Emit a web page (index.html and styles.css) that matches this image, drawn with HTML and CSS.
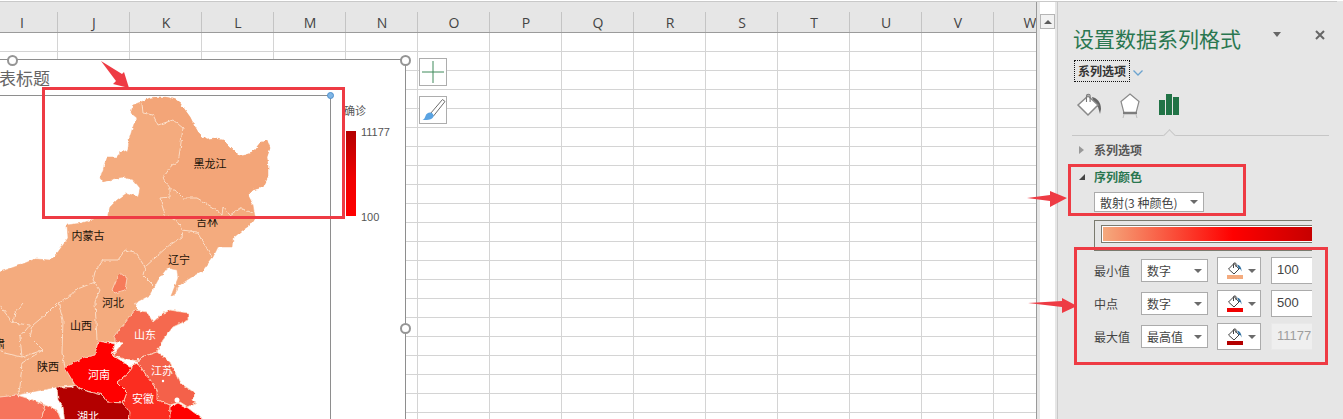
FILE: index.html
```html
<!DOCTYPE html>
<html lang="zh-CN">
<head>
<meta charset="utf-8">
<title>设置数据系列格式</title>
<link rel="stylesheet" href="styles.css">
</head>
<body>
<svg class="defs" width="0" height="0">
  <filter id="rough" x="-5%" y="-5%" width="110%" height="110%" color-interpolation-filters="sRGB">
    <feTurbulence type="fractalNoise" baseFrequency="0.22" numOctaves="2" seed="4"/>
    <feDisplacementMap in="SourceGraphic" scale="3.500" xChannelSelector="R" yChannelSelector="G"/>
  </filter>
  <symbol id="bucket" viewBox="0 0 16 13">
    <path d="M1.500 7 7 1.500 12 7 7 12Z" fill="#fff" stroke="#444" stroke-width="1"/>
    <path d="M6.500 6V2.200a1.300 1.300 0 0 1 2.600 0V5" fill="none" stroke="#444" stroke-width="1"/>
    <path d="M10 2.500c3 .6 4.500 3 4.600 7l-1.300-2.400L12 7Z" fill="#2f6f9f"/>
  </symbol>
</svg>
<main class="app">
  <section class="sheet">
    <header class="col-heads">
      <div class="col first">I</div><div class="col">J</div><div class="col">K</div><div class="col">L</div><div class="col">M</div><div class="col">N</div><div class="col">O</div><div class="col">P</div><div class="col">Q</div><div class="col">R</div><div class="col">S</div><div class="col">T</div><div class="col">U</div><div class="col">V</div><div class="col">W</div>
    </header>
    <div class="cells"></div>

    <div class="chart">
      <div class="chart-title">图表标题</div>
      <svg class="map" width="450" height="380" viewBox="-19 60 450 380">
        <g class="rough">
        <path class="land" d="M-20 280 0 272 20 265 35 259 50 260 58 252 68 238 67 225 82 223 95 219 107 218 110 207 117 200 127 193 138 197 140 188 133 180 123 177 113 179 103 182 100 178 103 170 105 163 107 157 117 157 120 153 128 150 129 140 132 130 134 124 137 118 131 113 133 105 138 103 143 101 150 98 157 97 164 97 170 98 176 100 180 103 185 110 190 117 194 125 198 132 203 137 207 140 215 139 223 140 228 145 233 150 240 156 246 155 252 153 256 148 260 143 267 140 270 148 267 157 268 167 268 177 263 187 253 190 248 195 253 205 255 217 250 225 243 230 233 238 232 247 218 247 213 257 203 270 187 280 177 287 175 295 171 296 178 278 177 270 167 268 158 280 150 295 135 303 138 310 135 310 125 323 115 335 115 342 98 341 95 355 82 358 65 368 75 385 57 387 17 395 0 397-20 400Z"/>
        <path class="orange-2" d="M143 101 150 98 157 97 164 97 170 98 176 100 180 103 185 110 190 117 194 125 198 132 203 137 207 140 215 139 223 140 228 145 233 150 240 156 246 155 252 153 256 148 260 143 267 140 270 148 267 157 268 167 268 177 263 187 253 190 248 195 253 205 253 213 240 208 230 215 223 207 222 215 212 207 197 198 183 198 177 192 170 188 163 178 172 165 178 162 180 150 183 128 173 120 158 125 153 115 143 113 142 104Z"/>
        <g class="borders">
          <path d="M142 104 143 113 153 115 158 125 173 120 183 128 180 150 178 162 172 165 163 178 170 188 170 197 160 198 162 205 165 215 177 221 182 230 197 232 212 257"/>
          <path d="M170 188 177 192 183 198 197 198 212 207 222 215 223 207 230 215 240 208 253 213"/>
          <path d="M183 232 182 237 167 247 155 258 145 267 143 275 153 285"/>
          <path d="M145 267 135 252 125 250 118 260 103 260 95 272 93 280 100 290 95 302 97 340"/>
          <path d="M95 282 75 290 68 298 58 302 63 320 62 353 65 367"/>
          <path d="M58 302 45 315 33 325 30 337 43 350 22 363 20 387 17 395"/>
          <path d="M23 303 15 313 13 323 30 325 20 337 22 357 43 350"/>
          <path d="M0 306 13 323M0 352 22 357"/>
        </g>
        <path class="beijing" d="M120 273 127 278 125 290 115 293 112 290 117 278Z"/>
        <path class="shandong" d="M135 310 147 312 153 322 163 313 170 310 188 313 188 320 173 327 163 340 157 352 142 357 138 362 127 360 112 355 123 343 115 342 115 335 125 323Z"/>
        <path class="jiangsu" d="M142 357 157 352 170 362 180 383 195 393 192 400 197 403 188 407 180 402 170 405 157 400 157 390 148 378 138 363Z"/>
        <path class="anhui" d="M132 365 138 363 148 378 157 390 157 400 170 405 170 425 133 425 123 403 127 392 117 382 128 373 132 368Z"/>
        <path class="henan" d="M98 341 115 344 112 355 125 363 132 368 128 373 117 382 127 392 123 403 107 402 102 395 83 390 75 385 65 368 82 358 95 355Z"/>
        <path class="zhejiang" d="M170 407 178 403 188 408 200 417 203 425 170 425Z"/>
        <path class="hubei" d="M57 387 72 387 75 385 83 390 102 395 107 402 123 403 130 413 128 425 65 425 63 407 58 400Z"/>
        <path class="sichuan" d="M-20 400 0 397 17 395 33 400 45 405 40 425-20 425Z"/>
        <path class="chongqing" d="M45 405 57 410 63 425 40 425Z"/>
        </g>
        <circle class="sea" cx="177" cy="400" r="2.500"/>
        <circle class="sea" cx="163" cy="381" r="1.200"/>
        <circle class="sea" cx="138" cy="359" r="1"/>
        <g class="labels">
          <text x="210" y="168">黑龙江</text>
          <text x="88" y="240">内蒙古</text>
          <text x="207" y="226">吉林</text>
          <text x="179" y="264">辽宁</text>
          <text x="113" y="307">河北</text>
          <text x="81" y="330">山西</text>
          <text x="48" y="371">陕西</text>
          <text x="-6" y="348">甘肃</text>
          <text class="light" x="145" y="339">山东</text>
          <text class="light" x="99" y="379">河南</text>
          <text class="light" x="162" y="375">江苏</text>
          <text class="light" x="143" y="403">安徽</text>
          <text class="light" x="88" y="421">湖北</text>
        </g>
      </svg>
      <div class="plot"><i class="plot-handle"></i></div>
      <div class="legend-title">确诊</div>
      <div class="legend-bar"></div>
      <div class="legend-max">11177</div>
      <div class="legend-min">100</div>
      <i class="handle h-top"></i>
      <i class="handle h-corner"></i>
      <i class="handle h-mid"></i>
    </div>

    <button class="chart-btn btn-plus" aria-label="图表元素">
      <svg width="26" height="26" viewBox="0 0 26 26"><path class="plus-stroke" d="M13 2v22M2 13h22"/></svg>
    </button>
    <button class="chart-btn btn-brush" aria-label="图表样式">
      <svg width="26" height="26" viewBox="0 0 26 26">
        <path class="brush-handle" d="M10.500 16.500 22.500 2.500 25 4.500 13.500 19Z"/>
        <path class="brush-tip" d="M10 15.500c2 0 3.500 1.500 3.500 3.500-.5 3-4 4.500-11 4 2-1 2.500-2.500 3-4 .6-2 2.500-3.500 4.500-3.500Z"/>
      </svg>
    </button>
  </section>

  <div class="scrollbar"><div class="scroll-up"><i></i></div></div>

  <aside class="panel">
    <div class="panel-head">
      <h1 class="panel-title">设置数据系列格式</h1>
      <i class="panel-caret"></i>
      <svg class="panel-close" width="10" height="10" viewBox="0 0 10 10"><path d="M1 1 9 9M9 1 1 9"/></svg>
    </div>
    <div class="tab-row">
      <span class="tab">系列选项</span>
      <svg class="chev" width="10" height="6" viewBox="0 0 10 6"><path d="M.5.500 5 5 9.500.500"/></svg>
    </div>
    <div class="icon-row">
      <svg width="27" height="25" viewBox="0 0 27 25">
        <path d="M16 5c5 1 9 5 9 12l-1 5-2-7-4-3Z" fill="#666"/>
        <path d="M2 13 12 4 22 13 12 23Z" fill="#fff" stroke="#8a8a8a" stroke-width="1.500"/>
        <path d="M10.500 10V4a1.800 1.800 0 0 1 3.600 0v6" fill="none" stroke="#777" stroke-width="1.100"/>
      </svg>
      <svg class="pent" width="22" height="26" viewBox="0 0 22 26">
        <path d="M11 2 20 9.500 17 21H5L2 9.500Z" fill="#fff" stroke="#8a8a8a" stroke-width="1.200"/>
        <path d="M4 21h14" stroke="#7d7d7d" stroke-width="2.500"/>
        <path d="M5 22.500 4 26M17 22.500 18 26" stroke="#bbb" stroke-width="1"/>
      </svg>
      <div class="bars"><i class="b1"></i><i class="b2"></i><i class="b3"></i></div>
    </div>
    <div class="divider"><i class="notch"></i></div>
    <div class="sec-head"><i class="tri-open"></i><span>系列选项</span></div>
    <div class="sec-head active"><i class="tri-filled"></i><span>序列颜色</span></div>
    <div class="pad">
      <div class="select scatter"><span>散射(3 种颜色)</span><i class="caret"></i></div>
    </div>
    <div class="clip">
      <div class="gradient-box"><div class="gradient"></div></div>
      <div class="grid-rows">
        <span class="r-label">最小值</span>
        <div class="select"><span>数字</span><i class="caret"></i></div>
        <div class="color-btn"><div class="swatch"><svg width="16" height="13"><use href="#bucket"/></svg><i class="bar c-min"></i></div><i class="caret"></i></div>
        <div class="num">100</div>
        <span class="r-label">中点</span>
        <div class="select"><span>数字</span><i class="caret"></i></div>
        <div class="color-btn"><div class="swatch"><svg width="16" height="13"><use href="#bucket"/></svg><i class="bar c-mid"></i></div><i class="caret"></i></div>
        <div class="num">500</div>
        <span class="r-label">最大值</span>
        <div class="select"><span>最高值</span><i class="caret"></i></div>
        <div class="color-btn"><div class="swatch"><svg width="16" height="13"><use href="#bucket"/></svg><i class="bar c-max"></i></div><i class="caret"></i></div>
        <div class="num off">11177</div>
      </div>
    </div>
  </aside>

  <div class="note note-a"></div>
  <div class="note note-b"></div>
  <div class="note note-c"></div>
  <svg class="arrows" width="1343" height="419" viewBox="0 0 1343 419">
    <path d="M101 61 122 74 124 72 129 88 113 84 116 81Z"/>
    <path d="M1027 198 1050 195 1050 191 1067 198 1050 207 1050 201Z"/>
    <path d="M1028 303 1062 301 1062 298 1077 306 1062 313 1062 307Z"/>
  </svg>
</main>
</body>
</html>
```
FILE: styles.css
```css
* { box-sizing: border-box; }
html, body { margin: 0; padding: 0; }
body {
  width: 1343px;
  height: 419px;
  overflow: hidden;
  background: #e6e6e6;
  font-family: "Noto Sans CJK SC", "Noto Sans", sans-serif;
  color: #444;
}
.defs { position: absolute; }
.app { position: relative; display: flex; width: 1343px; height: 419px; overflow: hidden; border-top: 1px solid #fff; }
.app::before { content: ""; position: absolute; left: 0; top: 0; width: 1337px; height: 1px; background: #c9c9c9; z-index: 3; }

/* sheet */
.sheet { position: relative; flex: 0 0 1037px; height: 418px; overflow: hidden; display: flex; flex-direction: column; background: #fff; border-right: 1px solid #9a9a9a; }
.col-heads { flex: 0 0 30px; display: flex; margin-left: -14px; background: #e6e6e6; border-bottom: 1px solid #9b9b9b; }
.col { flex: 0 0 72px; padding-top: 12px; text-align: center; position: relative; font: 14px/19px "Open Sans", "Liberation Sans", sans-serif; color: #444; }
.col::after { content: ""; position: absolute; right: 0; top: 11px; bottom: 0; width: 1px; background: #c4c4c4; }
.cells {
  flex: 1;
  background-color: #fff;
  background-image:
    linear-gradient(to right, #d4d4d4 1px, transparent 1px),
    linear-gradient(to bottom, #d4d4d4 1px, transparent 1px);
  background-size: 72px 19px;
  background-position: 57px 18px;
}

/* chart */
.chart { position: absolute; left: -20px; top: 58px; width: 426px; height: 420px; background: #fff; border: 1px solid #8e8e8e; }
.map { position: absolute; left: 0; top: 0; }
.rough { filter: url(#rough); }
.land { fill: #f4ab7e; stroke: #f4ab7e; stroke-width: .5; }
.orange-2 { fill: #f3a578; }
.borders path { fill: none; stroke: #fbdcc5; stroke-width: 1; }
.beijing { fill: #f67b5a; stroke: #fbdcc5; stroke-width: .8; }
.shandong { fill: #f5694f; stroke: #fbdcc5; stroke-width: .8; }
.jiangsu { fill: #f4614a; stroke: #fbdcc5; stroke-width: .8; }
.anhui { fill: #fb2d20; stroke: #fbdcc5; stroke-width: .8; }
.henan { fill: #ff0000; stroke: #fbdcc5; stroke-width: .8; }
.zhejiang { fill: #ff0000; stroke: #fbdcc5; stroke-width: .8; }
.hubei { fill: #b30000; stroke: #fbdcc5; stroke-width: .8; }
.sichuan { fill: #f6745c; stroke: #fbdcc5; stroke-width: .8; }
.chongqing { fill: #f5614a; stroke: #fbdcc5; stroke-width: .8; }
.sea { fill: #fff; }
.labels text { font-size: 11px; fill: #1a1208; text-anchor: middle; }
.labels text.light { fill: #fff; }
.chart-title { position: absolute; left: 1px; top: 6px; font-size: 17px; line-height: 24px; color: #666; white-space: nowrap; }
.plot { position: absolute; left: 0; top: 35px; width: 350px; height: 400px; border: 1px solid #8e8e8e; border-left: 0; border-bottom: 0; }
.plot-handle { position: absolute; right: -4px; top: -4px; width: 7px; height: 7px; border-radius: 50%; background: #7fb6e6; border: 1px solid #4f8fcb; }
.legend-title { position: absolute; left: 363px; top: 42px; width: 22px; overflow: hidden; font-size: 11px; line-height: 16px; color: #555; white-space: nowrap; }
.legend-bar { position: absolute; left: 365px; top: 71px; width: 10px; height: 85px; background: linear-gradient(to bottom, #b30000, #f00000 55%, #ff0000); }
.legend-max { position: absolute; left: 380px; top: 65px; font: 11px/14px "Liberation Sans", sans-serif; color: #555; }
.legend-min { position: absolute; left: 380px; top: 150px; font: 11px/14px "Liberation Sans", sans-serif; color: #555; }
.handle { position: absolute; width: 11px; height: 11px; border-radius: 50%; background: #fff; border: 2px solid #959595; }
.h-top { left: 26px; top: -5px; }
.h-corner { right: -6px; top: -5px; }
.h-mid { right: -6px; top: 263px; }

.chart-btn { position: absolute; left: 419px; width: 28px; height: 28px; padding: 0; background: #fff; border: 1px solid #adadad; display: block; }
.chart-btn svg { display: block; }
.btn-plus { top: 57px; }
.btn-brush { top: 95px; }
.plus-stroke { fill: none; stroke: #3f8a5a; stroke-width: 1; }
.brush-handle { fill: #fff; stroke: #6d6d6d; stroke-width: 1; }
.brush-tip { fill: #5aa3e2; }

/* scrollbar */
.scrollbar { flex: 0 0 18px; padding: 13px 0 0 3px; background: linear-gradient(to right, #e6e6e6 3px, #fff 3px, #fff 18px); }
.scroll-up { width: 15px; height: 15px; display: flex; align-items: center; justify-content: center; background: #f2f2f2; border: 1px solid #b5b5b5; }
.scroll-up i { width: 0; height: 0; border: 4px solid transparent; border-top: 0; border-bottom: 4px solid #5c5c5c; }

/* panel */
.panel { flex: 1; min-width: 0; height: 418px; margin-left: 2px; padding-left: 15px; border-left: 1px solid #c9c9c9; color: #444; }
.panel-head { display: flex; align-items: center; height: 30px; margin-top: 22px; position: relative; }
.panel-title { margin: 0; font-size: 21px; line-height: 30px; font-weight: 400; color: #2a7750; white-space: nowrap; }
.panel-caret { margin-left: 32px; margin-top: -7px; width: 0; height: 0; border: 4.500px solid transparent; border-bottom: 0; border-top: 5px solid #666; }
.panel-close { margin-left: 34px; margin-top: -7px; }
.panel-close path { fill: none; stroke: #666; stroke-width: 2; }
.tab-row { display: flex; align-items: center; margin-top: 7px; height: 22px; padding-left: 1px; }
.tab { height: 22px; padding: 0 3px; border: 1px dotted #111; font-size: 12px; line-height: 20px; font-weight: 700; color: #333; }
.chev { margin-left: 3px; margin-top: 3px; }
.chev path { fill: none; stroke: #6ba3cf; stroke-width: 1.300; }
.icon-row { display: flex; align-items: flex-start; margin-top: 10px; height: 26px; padding-left: 3px; }
.pent { margin-left: 16px; }
.bars { display: flex; align-items: flex-end; gap: 1px; margin-left: 18px; height: 23px; }
.bars i { display: block; width: 6px; background: #217346; }
.b1 { height: 15px; }
.b2 { height: 21px; }
.b3 { height: 18px; }
.divider { position: relative; margin-top: 17px; width: 257px; height: 1px; background: #c6c6c6; margin-left: -1px; }
.notch { position: absolute; left: 93px; top: -4px; width: 9px; height: 9px; background: #e6e6e6; border-left: 1px solid #c6c6c6; border-top: 1px solid #c6c6c6; transform: rotate(45deg); }
.sec-head { display: flex; align-items: center; height: 18px; margin-top: 5px; padding-left: 6px; font-size: 12px; font-weight: 700; color: #555; }
.sec-head.active { margin-top: 9px; color: #2a7750; }
.sec-head span { margin-left: 8px; line-height: 18px; }
.tri-open { width: 0; height: 0; border: 4px solid transparent; border-left: 5px solid #999; border-right: 0; margin-right: 2px; }
.tri-filled { width: 0; height: 0; border-top: 6px solid transparent; border-right: 6px solid #444; margin-right: 1px; }
.pad { padding-left: 21px; margin-top: 6px; }
.select { display: flex; align-items: center; justify-content: space-between; height: 23px; padding: 0 5px; background: #fff; border: 1px solid #ababab; font-size: 12px; color: #444; white-space: nowrap; }
.scatter { width: 110px; height: 20px; }
.caret { flex: none; width: 0; height: 0; border: 4px solid transparent; border-bottom: 0; border-top: 4px solid #6b6b6b; }
.clip { width: 239px; overflow: hidden; }
.gradient-box { margin: 8px 0 0 21px; height: 31px; width: 240px; padding: 4px 0 0 6px; border: 1px solid #7a7a6e; border-right: 0; }
.gradient { width: 240px; height: 18px; border: 1px solid #7a7a6e; outline: 1px solid #fff; outline-offset: -2px; background: linear-gradient(to right, #f4ab7e 0, #ff0000 55%, #b30000 100%); }
.grid-rows { display: grid; grid-template-columns: 47px 76px 54px 60px; column-gap: 0; row-gap: 6px; align-items: center; margin: 6px 0 0 21px; width: 250px; }
.grid-rows .select { width: 67px; }
.r-label { font-size: 12px; line-height: 27px; color: #444; }
.color-btn { display: flex; align-items: center; justify-content: space-between; width: 44px; height: 27px; padding: 0 4px 0 8px; background: #fff; border: 1px solid #ababab; }
.swatch { display: flex; flex-direction: column; align-items: center; width: 17px; }
.swatch svg { display: block; }
.bar { display: block; width: 16px; height: 4px; }
.c-min { background: #f4ab7e; }
.c-mid { background: #f00000; }
.c-max { background: #b30000; }
.num { height: 27px; padding-left: 5px; background: #fff; border: 1px solid #ababab; font: 13px/24px "Liberation Sans", sans-serif; color: #444; }
.num.off { background: #efefef; border-color: #e9e9e9; color: #9e9e9e; }

/* annotations */
.note { position: absolute; border: 3px solid #ee3b44; z-index: 5; }
.note-a { left: 42px; top: 86px; width: 303px; height: 132px; }
.note-b { left: 1068px; top: 163px; width: 178px; height: 52px; }
.note-c { left: 1074px; top: 246px; width: 254px; height: 118px; }
.arrows { position: absolute; left: 0; top: -1px; z-index: 6; }
.arrows path { fill: #ee3b44; }
```
